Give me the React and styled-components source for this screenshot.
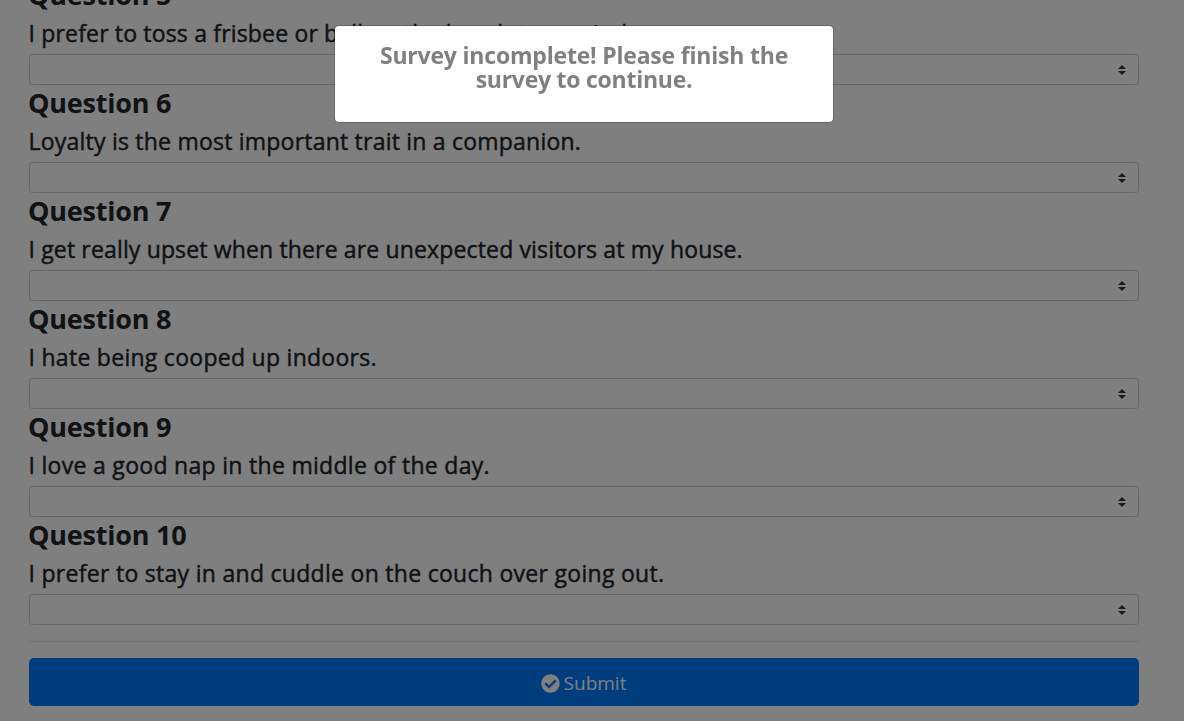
import React from "react";
import styled, { createGlobalStyle } from "styled-components";

const Global = createGlobalStyle`
  *, *::before, *::after { box-sizing: border-box; }
  html, body { margin: 0; height: 100%; overflow: hidden; background: #fff; }
  body { font-family: "Open Sans", "Noto Sans", sans-serif; color: #212529; }
  h3, h4, h5 { margin: 0; }
`;

const Page = styled.main`
  height: 721px;
  overflow: hidden;
  display: flex;
  flex-direction: column;
  justify-content: flex-end;
  padding: 0 45px 15px 29px;
`;

const Question = styled.section`
  height: 108px;
  flex: none;
  display: flex;
  flex-direction: column;
`;

const Title = styled.h3`
  height: 38px;
  margin-left: -1px;
  font-size: 27px;
  font-weight: 700;
  line-height: 35px;
  white-space: nowrap;
  letter-spacing: -0.22px;
`;

const Prompt = styled.h4`
  height: 39px;
  margin-left: -0.5px;
  font-size: 23px;
  font-weight: 500;
  line-height: 37px;
  white-space: nowrap;
  letter-spacing: ${(p) => p.$track}px;
  -webkit-text-stroke: 0.45px currentColor;
`;

const Select = styled.div`
  height: 31px;
  display: flex;
  align-items: center;
  justify-content: flex-end;
  padding-right: 12px;
  border: 1px solid #ced4da;
  border-radius: 3.2px;
`;

const Rule = styled.hr`
  flex: none;
  width: 100%;
  margin: 16px 0;
  border: 0;
  border-top: 1px solid rgba(0, 0, 0, 0.1);
`;

const Submit = styled.button`
  flex: none;
  height: 48px;
  display: flex;
  align-items: center;
  justify-content: center;
  gap: 4px;
  padding: 2px 7px 0 6px;
  border: 0;
  border-radius: 4.8px;
  background: #007bff;
  color: #fff;
  font: 400 19px "Open Sans", "Noto Sans", sans-serif;
`;

const Backdrop = styled.div`
  position: fixed;
  inset: 0;
  background: rgba(0, 0, 0, 0.5);
`;

const Dialog = styled.div`
  position: fixed;
  top: 25px;
  left: 334px;
  width: 500px;
  height: 98px;
  padding-top: 17px;
  border: 1px solid rgba(0, 0, 0, 0.2);
  border-radius: 4.8px;
  background: #fff;
  background-clip: padding-box;
`;

const Message = styled.h5`
  display: flex;
  flex-direction: column;
  align-items: center;
  font-size: 23px;
  font-weight: 700;
  line-height: 24px;
  color: #808080;
`;

const Line = styled.span`
  white-space: nowrap;
  letter-spacing: ${(p) => p.$track}px;
`;

const questions = [
  ["Question 5", "I prefer to toss a frisbee or ball on the beach to unwind.", 0.17],
  ["Question 6", "Loyalty is the most important trait in a companion.", 0.22],
  ["Question 7", "I get really upset when there are unexpected visitors at my house.", 0.15],
  ["Question 8", "I hate being cooped up indoors.", 0.28],
  ["Question 9", "I love a good nap in the middle of the day.", 0.3],
  ["Question 10", "I prefer to stay in and cuddle on the couch over going out.", 0.29],
];

const Arrows = () => (
  <svg width="8" height="10" viewBox="0 0 4 5" fill="#343a40">
    <path d="M2 0L0 2h4zm0 5L0 3h4z" />
  </svg>
);

const Check = () => (
  <svg width="19" height="19" viewBox="0 0 512 512" fill="currentColor">
    <path d="M504 256c0 136.967-111.033 248-248 248S8 392.967 8 256 119.033 8 256 8s248 111.033 248 248zM227.314 387.314l184-184c6.248-6.248 6.248-16.379 0-22.627l-22.627-22.627c-6.248-6.249-16.379-6.249-22.628 0L216 308.118l-70.059-70.059c-6.248-6.248-16.379-6.248-22.628 0l-22.627 22.627c-6.248 6.248-6.248 16.379 0 22.627l104 104c6.249 6.249 16.379 6.249 22.628.001z" />
  </svg>
);

export default function App() {
  return (
    <>
      <Global />
      <Page>
        {questions.map(([title, prompt, track]) => (
          <Question key={title}>
            <Title>{title}</Title>
            <Prompt $track={track}>{prompt}</Prompt>
            <Select><Arrows /></Select>
          </Question>
        ))}
        <Rule />
        <Submit><Check />Submit</Submit>
      </Page>
      <Backdrop />
      <Dialog role="dialog">
        <Message>
          <Line $track={-0.2}>Survey incomplete! Please finish the</Line>
          <Line $track={-0.25}>survey to continue.</Line>
        </Message>
      </Dialog>
    </>
  );
}
